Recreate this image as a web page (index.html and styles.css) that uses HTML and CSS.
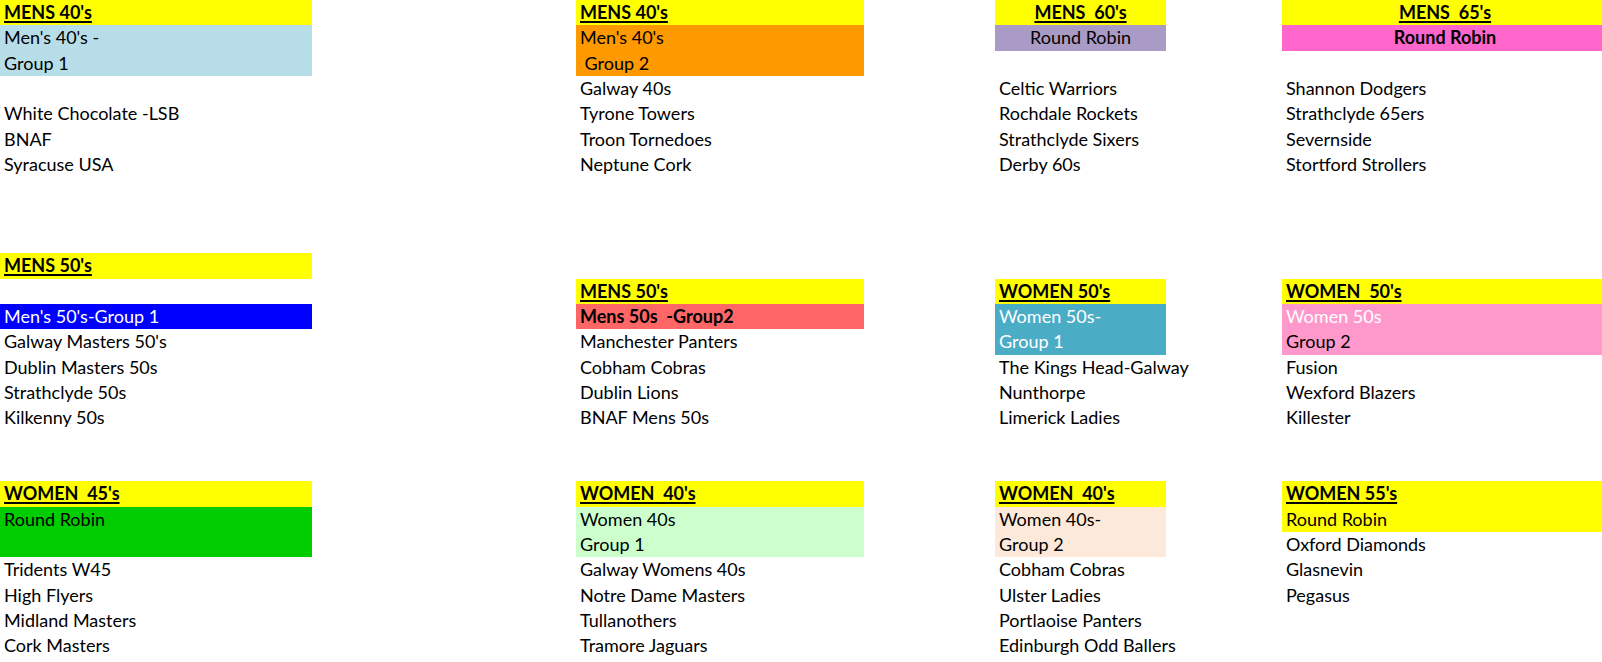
FILE: index.html
```html
<!DOCTYPE html>
<html lang="en">
<head>
<meta charset="utf-8">
<title>Teams</title>
<link rel="stylesheet" href="styles.css">
</head>
<body>
<div class="sheet">
  <div class="col col-a">
    <div class="cell hdr"><span class="u">MENS 40's</span></div>
    <div class="cell lblue">Men's 40's -</div>
    <div class="cell lblue">Group 1</div>
    <div class="cell"></div>
    <div class="cell">White Chocolate -LSB</div>
    <div class="cell">BNAF</div>
    <div class="cell">Syracuse USA</div>
    <div class="cell"></div>
    <div class="cell"></div>
    <div class="cell"></div>
    <div class="cell hdr"><span class="u">MENS 50's</span></div>
    <div class="cell"></div>
    <div class="cell blue">Men's 50's-Group 1</div>
    <div class="cell">Galway Masters 50's</div>
    <div class="cell">Dublin Masters 50s</div>
    <div class="cell">Strathclyde 50s</div>
    <div class="cell">Kilkenny 50s</div>
    <div class="cell"></div>
    <div class="cell"></div>
    <div class="cell hdr"><span class="u">WOMEN&nbsp; 45's</span></div>
    <div class="cell green">Round Robin</div>
    <div class="cell green"></div>
    <div class="cell">Tridents W45</div>
    <div class="cell">High Flyers</div>
    <div class="cell">Midland Masters</div>
    <div class="cell">Cork Masters</div>
  </div>
  <div class="col col-c">
    <div class="cell hdr"><span class="u">MENS 40's</span></div>
    <div class="cell orange">Men's 40's</div>
    <div class="cell orange">&nbsp;Group 2</div>
    <div class="cell">Galway 40s</div>
    <div class="cell">Tyrone Towers</div>
    <div class="cell">Troon Tornedoes</div>
    <div class="cell">Neptune Cork</div>
    <div class="cell"></div>
    <div class="cell"></div>
    <div class="cell"></div>
    <div class="cell"></div>
    <div class="cell hdr"><span class="u">MENS 50's</span></div>
    <div class="cell salmon bold">Mens 50s&nbsp; -Group2</div>
    <div class="cell">Manchester Panters</div>
    <div class="cell">Cobham Cobras</div>
    <div class="cell">Dublin Lions</div>
    <div class="cell">BNAF Mens 50s</div>
    <div class="cell"></div>
    <div class="cell"></div>
    <div class="cell hdr"><span class="u">WOMEN&nbsp; 40's</span></div>
    <div class="cell lgreen">Women 40s</div>
    <div class="cell lgreen">Group 1</div>
    <div class="cell">Galway Womens 40s</div>
    <div class="cell">Notre Dame Masters</div>
    <div class="cell">Tullanothers</div>
    <div class="cell">Tramore Jaguars</div>
  </div>
  <div class="col col-e">
    <div class="cell hdr center"><span class="u">MENS&nbsp; 60's</span></div>
    <div class="cell purple center">Round Robin</div>
    <div class="cell"></div>
    <div class="cell">Celtic Warriors</div>
    <div class="cell">Rochdale Rockets</div>
    <div class="cell">Strathclyde Sixers</div>
    <div class="cell">Derby 60s</div>
    <div class="cell"></div>
    <div class="cell"></div>
    <div class="cell"></div>
    <div class="cell"></div>
    <div class="cell hdr"><span class="u">WOMEN 50's</span></div>
    <div class="cell teal">Women 50s-</div>
    <div class="cell teal">Group 1</div>
    <div class="cell">The Kings Head-Galway</div>
    <div class="cell">Nunthorpe</div>
    <div class="cell">Limerick Ladies</div>
    <div class="cell"></div>
    <div class="cell"></div>
    <div class="cell hdr"><span class="u">WOMEN&nbsp; 40's</span></div>
    <div class="cell peach">Women 40s-</div>
    <div class="cell peach">Group 2</div>
    <div class="cell">Cobham Cobras</div>
    <div class="cell">Ulster Ladies</div>
    <div class="cell">Portlaoise Panters</div>
    <div class="cell">Edinburgh Odd Ballers</div>
  </div>
  <div class="col col-g">
    <div class="cell hdr center"><span class="u">MENS&nbsp; 65's</span></div>
    <div class="cell pink center bold">Round Robin</div>
    <div class="cell"></div>
    <div class="cell">Shannon Dodgers</div>
    <div class="cell">Strathclyde 65ers</div>
    <div class="cell">Severnside</div>
    <div class="cell">Stortford Strollers</div>
    <div class="cell"></div>
    <div class="cell"></div>
    <div class="cell"></div>
    <div class="cell"></div>
    <div class="cell hdr"><span class="u">WOMEN&nbsp; 50's</span></div>
    <div class="cell lpink white">Women 50s</div>
    <div class="cell lpink">Group 2</div>
    <div class="cell">Fusion</div>
    <div class="cell">Wexford Blazers</div>
    <div class="cell">Killester</div>
    <div class="cell"></div>
    <div class="cell"></div>
    <div class="cell hdr"><span class="u">WOMEN 55's</span></div>
    <div class="cell yellow">Round Robin</div>
    <div class="cell">Oxford Diamonds</div>
    <div class="cell">Glasnevin</div>
    <div class="cell">Pegasus</div>
    <div class="cell"></div>
    <div class="cell"></div>
  </div>
</div>
</body>
</html>
```

FILE: styles.css
```css
html, body {
  margin: 0;
  padding: 0;
  background: #ffffff;
  overflow: hidden;
}

.sheet {
  display: grid;
  grid-template-columns: 312px 264px 288px 131px 171px 116px 326px;
  width: 1608px;
  font-family: Lato, "Open Sans", sans-serif;
  font-size: 18px;
  color: #000000;
}

.col { display: flex; flex-direction: column; }
.col-a { grid-column: 1; }
.col-c { grid-column: 3; }
.col-e { grid-column: 5; }
.col-g { grid-column: 7; }

.cell {
  height: 25.33px;
  line-height: 25.33px;
  padding-left: 4px;
  white-space: pre;
  overflow: visible;
}

.center { text-align: center; padding-left: 0; }
.bold { font-weight: 700; }

.hdr {
  background: #ffff00;
  font-weight: 700;
}
.u {
  text-decoration: underline;
  text-decoration-thickness: 1.5px;
  text-underline-offset: 2px;
}

.yellow { background: #ffff00; }
.lblue { background: #b7dde8; }
.orange { background: #ff9900; }
.purple { background: #aa9bc6; }
.pink { background: #ff66cc; }
.blue { background: #0000ff; color: #ffffff; }
.salmon { background: #ff6666; }
.teal { background: #4bacc6; color: #ffffff; }
.lpink { background: #ff99cc; }
.white { color: #ffffff; }
.green { background: #00cc00; }
.lgreen { background: #ccffcc; }
.peach { background: #fde9d9; }
```
